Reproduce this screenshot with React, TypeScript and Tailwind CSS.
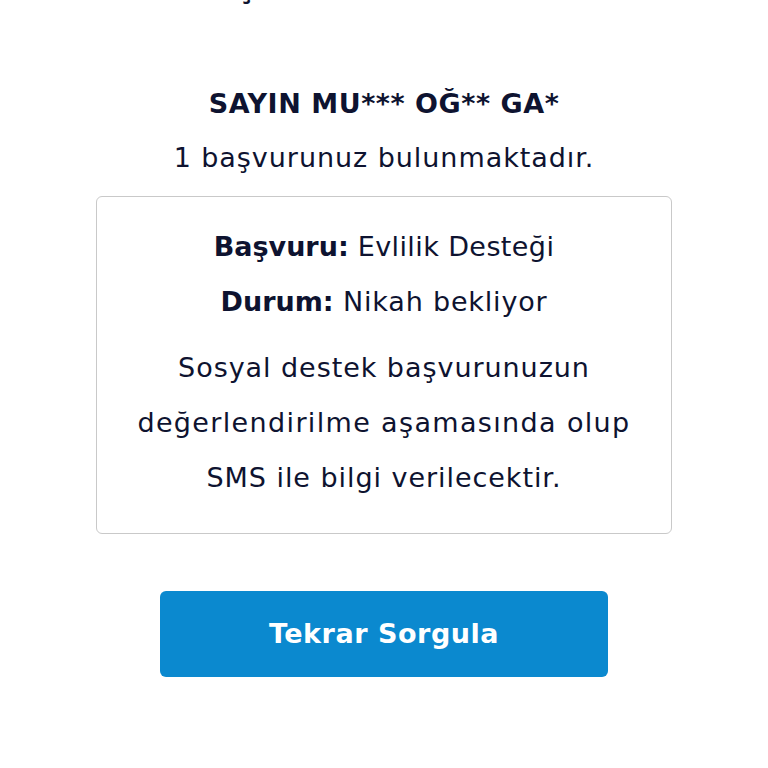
const App = () => {
  return (
    <div
      className="flex min-h-screen w-full flex-col items-center overflow-hidden bg-white text-[#0e1330]"
      style={{ fontFamily: "'DejaVu Sans', 'Noto Sans', sans-serif" }}
    >
      <h1 className="-mt-[31px] text-[30px] font-bold leading-[38px]">BAŞVURU SORGULAMA</h1>
      <h2 className="mt-[77px] text-[27px] font-bold leading-[40px] tracking-[0.02em]">SAYIN MU*** OĞ** GA*</h2>
      <p className="mt-[14px] text-[27px] leading-[40px] tracking-[0.035em]">1 başvurunuz bulunmaktadır.</p>

      <div className="mt-[18px] flex w-[576px] flex-col items-center rounded-md border border-[#c9c9c9] px-4 pb-[28px] pt-[28px] text-center text-[27px] tracking-[0.035em]">
        <p className="leading-[44px] tracking-[0.015em]">
          <span className="font-bold tracking-[0em]">Başvuru:</span> Evlilik Desteği
        </p>
        <p className="mt-[11px] leading-[44px] tracking-[0.03em]">
          <span className="font-bold tracking-[0em]">Durum:</span> Nikah bekliyor
        </p>
        <p className="mt-[16px] leading-[55px]">
          <span className="block">Sosyal destek başvurunuzun</span>
          <span className="block tracking-[0.05em]">değerlendirilme aşamasında olup</span>
          <span className="block">SMS ile bilgi verilecektir.</span>
        </p>
      </div>

      <button className="mt-[57px] flex h-[86px] w-[448px] items-center justify-center rounded-md bg-[#0b89cf] text-[27px] font-bold tracking-[0.02em] text-white">
        Tekrar Sorgula
      </button>
    </div>
  );
};

export default App;
